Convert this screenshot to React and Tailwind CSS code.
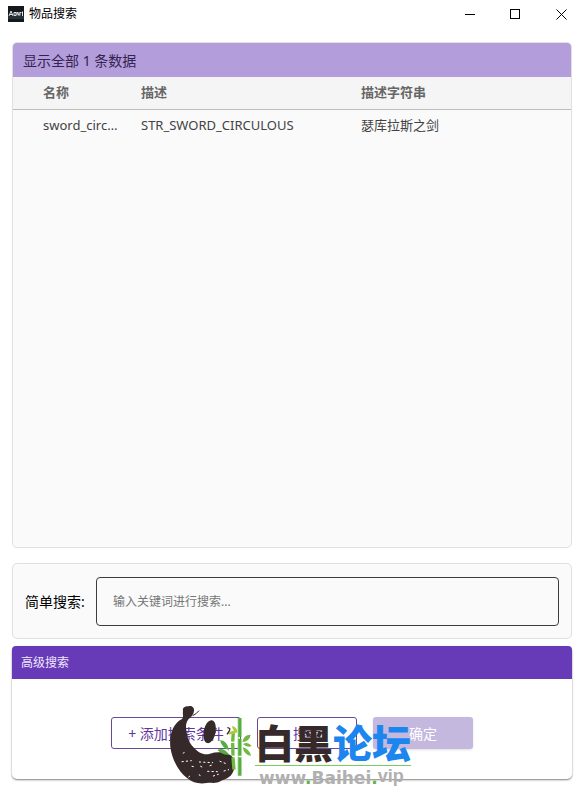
const rows = [
  { name: 'sword_circulous', desc: 'STR_SWORD_CIRCULOUS', text: '瑟库拉斯之剑' },
];

function TitleBar() {
  return (
    <header className="flex h-7 items-center justify-between pl-2">
      <div className="flex items-center gap-[5px]">
        <svg className="h-4 w-4" viewBox="0 0 16 16" aria-hidden="true">
          <rect width="16" height="16" fill="#14191d" />
          <rect y="10" width="16" height="3" fill="#263238" />
          <path
            d="M1 10 3 5 5 10M2 8.5H4.500M6 6.500H8V9.500H6ZM9 9.500V6L11 9.500V6M12 9.500V6.500H13.500M14.500 5.500V10"
            fill="none"
            stroke="#dfe5e8"
            strokeWidth="1"
          />
        </svg>
        <h1 className="text-[12px] leading-4 text-black">物品搜索</h1>
      </div>

      <div className="flex h-full">
        <button type="button" aria-label="Minimize" className="flex w-[45px] items-center justify-center">
          <svg className="h-[11px] w-[11px]" viewBox="0 0 11 11" stroke="#000">
            <path d="M0 5.500H10" />
          </svg>
        </button>
        <button type="button" aria-label="Maximize" className="flex w-[45px] items-center justify-center">
          <svg className="h-[11px] w-[11px]" viewBox="0 0 11 11" fill="none" stroke="#000">
            <rect x=".5" y=".5" width="9" height="9" />
          </svg>
        </button>
        <button type="button" aria-label="Close" className="flex w-[46px] items-center justify-center">
          <svg className="h-[11px] w-[11px]" viewBox="0 0 11 11" stroke="#000">
            <path d="M.5 .5 10.500 10.500M10.500 .5 .5 10.500" />
          </svg>
        </button>
      </div>
    </header>
  );
}

function ResultTable() {
  return (
    <section className="flex-1 overflow-hidden rounded-[5px] border border-[#e0e0e0] bg-[#fafafa]">
      <h2 className="flex h-[34px] items-center bg-[#b39ddb] px-[10px] text-[14px] text-[#33244f]">
        显示全部 1 条数据
      </h2>
      <table className="w-full table-fixed text-left text-[13px]">
        <thead>
          <tr className="h-8 border-b border-[#bdbdbd] bg-[#f5f5f5] text-[#666666]">
            <th className="w-[128px] pl-[30px] font-bold">名称</th>
            <th className="w-[220px] font-bold">描述</th>
            <th className="font-bold">描述字符串</th>
          </tr>
        </thead>
        <tbody>
          {rows.map((row) => (
            <tr key={row.name} className="h-[33px] text-[#424242]">
              <td className="truncate pr-5 pl-[30px]">{row.name}</td>
              <td>{row.desc}</td>
              <td>{row.text}</td>
            </tr>
          ))}
        </tbody>
      </table>
    </section>
  );
}

function SimpleSearch() {
  return (
    <section className="mt-[15px] flex items-center rounded-[5px] border border-[#e0e0e0] bg-[#fafafa] px-3 pt-[13px] pb-3">
      <label htmlFor="keyword" className="w-[71px] shrink-0 text-[14px] leading-4 text-black">
        简单搜索:
      </label>
      <input
        id="keyword"
        type="text"
        placeholder="输入关键词进行搜索..."
        className="h-[49px] min-w-0 flex-1 rounded-[4px] border border-[#3c3c3c] px-4 text-[12px] placeholder:text-[#757575]"
      />
    </section>
  );
}

function Panda() {
  return (
    <svg className="h-24 w-[100px] shrink-0" viewBox="0 0 300 288" aria-hidden="true">
      <path
        d="M69 48C66 38 76 32 86 34C95 30 104 38 102 48C101 58 94 67 86 72C78 82 77 92 79 106C82 128 88 146 102 158C114 172 132 182 150 176C176 168 206 172 219 188C228 202 226 226 212 242C200 252 192 252 182 258C170 267 154 262 140 264C120 268 98 264 82 250C58 232 36 196 31 156C27 118 40 84 66 72C72 66 67 56 69 48Z"
        fill="#352a29"
      />
      <path d="M98 62Q108 58 117 47" stroke="#352a29" strokeWidth="3" fill="none" />
      <ellipse cx="149" cy="110" rx="18" ry="35" transform="rotate(11 149 110)" fill="#352a29" />
      <g stroke="#fff" strokeWidth="3" strokeLinecap="round" strokeDasharray="4 9" fill="none">
        <path d="M70 175 74 170M66 200 94 197M118 201 158 203M180 199 204 208" />
        <path d="M96 214 106 216M122 214 132 219M150 212 162 208M143 229 172 230M192 228 206 224" />
        <path d="M86 246 92 241M118 239 122 245M160 243 175 238" />
      </g>
      <g fill="none">
        <path d="M239 69V126M239 131V182M239 187V242" stroke="#55ae40" strokeWidth="11" />
        <path d="M235 69V242" stroke="#8acb60" strokeWidth="2" />
        <path d="M220 112 218 140M218 144 219 182M219 187 222 224" stroke="#6dbb3f" strokeWidth="10" />
      </g>
      <path d="M216 93Q232 96 232 113Q217 107 216 93M203 116Q216 102 232 110Q218 121 203 116" fill="#b0c83b" />
      <path d="M180 136Q202 136 206 165Q186 159 180 136M200 150Q208 158 205 170M172 164Q192 156 208 179Q188 182 172 164" fill="#55ae40" />
      <path d="M247 141Q252 118 272 119Q269 139 247 141M249 147Q264 139 275 153Q262 160 249 147M248 157Q267 160 273 183Q252 179 248 157" fill="#72b843" />
      <path d="M202 98Q213 99 208 108L201 118" stroke="#352a29" strokeWidth="4" fill="none" />
    </svg>
  );
}

// Site mark that floats over the action buttons
function Watermark() {
  return (
    <div className="pointer-events-none absolute top-[49px] left-[148px] flex">
      <Panda />
      <div className="-ml-[5px] pt-[28px] whitespace-nowrap">
        <div className="border-b border-[#7ccb5e] pb-[2px] text-[39px] leading-[40px] font-black text-[#352a29]">
          白黑<span className="text-[#1c86ee]">论坛</span>
        </div>
        <div className="flex pl-1 font-['DejaVu_Sans'] text-[17px] leading-5 font-bold text-[#b0b0b0]">
          <span className="pt-[2px]">
            www<span className="text-[#62b546]">.</span>Baihei<span className="text-[#62b546]">.</span>
          </span>
          <span className="font-['Liberation_Sans'] text-[18px]">vip</span>
        </div>
      </div>
    </div>
  );
}

function AdvancedSearch() {
  return (
    <section className="relative mt-[7px] rounded-[5px] bg-white shadow-[0_1px_2px_rgba(0,0,0,0.5)]">
      <h2 className="flex h-[33px] items-center rounded-t-[4px] bg-[#673ab7] px-[9px] text-[12px] text-[#f0e8ff]">
        高级搜索
      </h2>
      <div className="flex justify-center gap-4 pt-[38px] pb-[30px] text-[14px] text-[#5e35a0]">
        <button type="button" className="h-8 w-[130px] rounded-[3px] border border-[#6b4a94]">
          + 添加搜索条件
        </button>
        <button type="button" className="h-8 w-[100px] rounded-[3px] border border-[#6b4a94]">
          搜索
        </button>
        <button type="button" disabled className="h-8 w-[100px] rounded-[3px] bg-[#c5b8df] text-white shadow-sm">
          确定
        </button>
      </div>
      <Watermark />
    </section>
  );
}

export default function App() {
  return (
    <div className="flex min-h-screen flex-col bg-white font-['Noto_Sans','Noto_Sans_CJK_SC',sans-serif]">
      <TitleBar />
      <main className="flex flex-1 flex-col px-3 pt-[14px] pb-3">
        <ResultTable />
        <SimpleSearch />
        <AdvancedSearch />
      </main>
    </div>
  );
}
